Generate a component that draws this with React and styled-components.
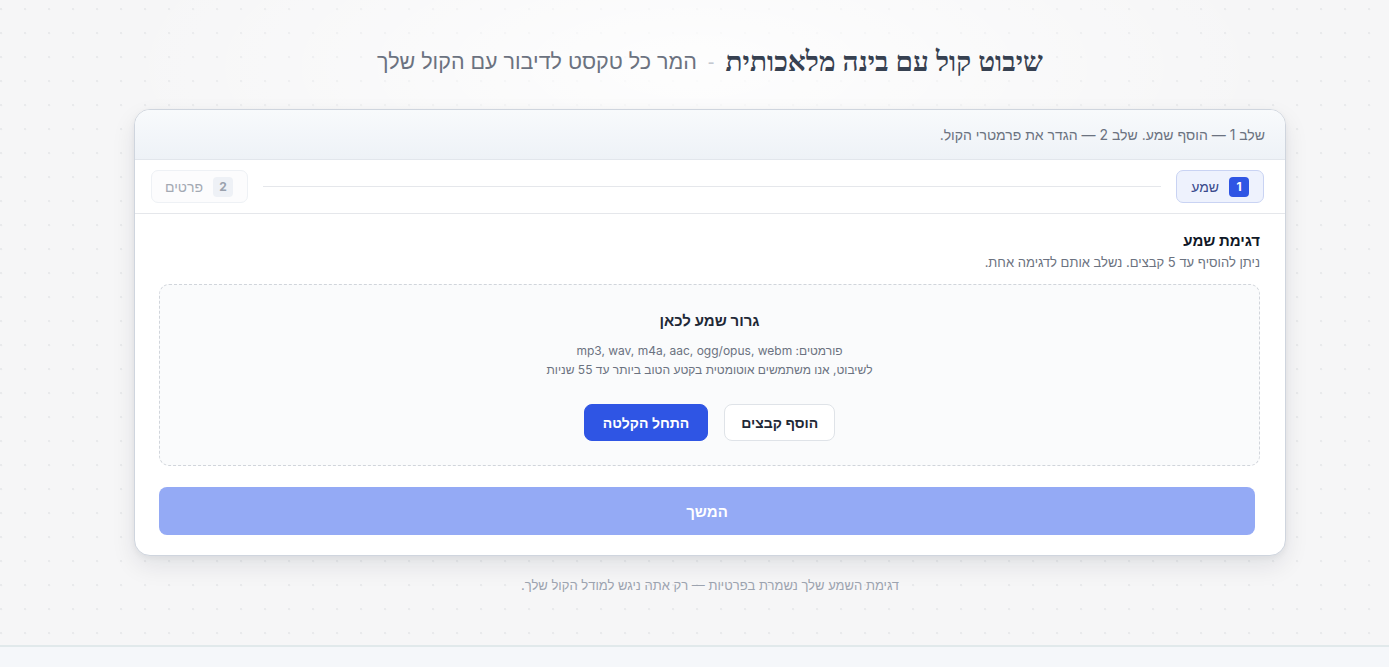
import React from "react";
import styled, { createGlobalStyle } from "styled-components";

const Global = createGlobalStyle`
  html, body { margin: 0; padding: 0; }
  body {
    font-family: Inter, "Liberation Sans", sans-serif;
    background: #f6f6f7;
    color: #111827;
  }
  * { box-sizing: border-box; }
`;

const Page = styled.div`
  direction: rtl;
  min-height: 667px;
  display: flex;
  flex-direction: column;
  background-color: #f6f6f7;
  background-image:
    radial-gradient(ellipse 60% 45% at 50% 10%, rgba(255,255,255,0.85), rgba(255,255,255,0) 70%),
    radial-gradient(circle at 1.2px 1.2px, #e9eaec 1.1px, transparent 1.4px);
  background-size: 100% 100%, 24px 24px;
  background-position: 0 0, 0px 8px;
`;

const Main = styled.main`
  flex: 1;
  display: flex;
  flex-direction: column;
  align-items: center;
  padding: 44px 0 0 31px;
  height: 645px;
`;

const TitleRow = styled.h1`
  margin: 0;
  display: flex;
  align-items: center;
  gap: 8px;
  height: 36px;
  font-weight: 400;
`;

const TitleMain = styled.span`
  font-family: "Liberation Serif", "DejaVu Serif", serif;
  font-size: 28px;
  font-weight: 700;
  color: #374151;
`;

const Dash = styled.span`
  font-family: "Liberation Sans", sans-serif;
  font-size: 20px;
  color: #c4c8d0;
  padding: 0 3px;
`;

const TitleSub = styled.span`
  font-family: "Liberation Sans", sans-serif;
  font-size: 21.5px;
  color: #6b7280;
`;

const Card = styled.section`
  margin-top: 29px;
  width: 1152px;
  background: #fff;
  border: 1px solid #cfd5de;
  border-radius: 16px;
  box-shadow: 0 10px 24px rgba(15, 23, 42, 0.09), 0 2px 6px rgba(15, 23, 42, 0.05);
  overflow: hidden;
`;

const CardHeader = styled.div`
  height: 50px;
  display: flex;
  align-items: center;
  padding: 0 20px;
  font-size: 14px;
  color: #6b7280;
  background: linear-gradient(180deg, #f8fafc 0%, #eef2f7 100%);
  border-bottom: 1px solid #e2e6ec;
`;

const Steps = styled.div`
  height: 54px;
  display: flex;
  align-items: center;
  gap: 15px;
  padding: 0 21px 0 16px;
  border-bottom: 1px solid #e5e7eb;
`;

const Step = styled.div`
  height: 33px;
  display: flex;
  align-items: center;
  gap: 10px;
  padding: 0 14px 0 ${p => (p.$active ? 14 : 13)}px;
  border-radius: 7px;
  border: 1px solid ${p => (p.$active ? "#c9d3f3" : "#eef1f5")};
  background: ${p => (p.$active ? "#eef2fd" : "#fcfcfd")};
  font-size: 14px;
  color: ${p => (p.$active ? "#3a4a8c" : "#a3a9b3")};
`;

const Badge = styled.span`
  width: 20px;
  height: 20px;
  border-radius: 4px;
  display: inline-flex;
  align-items: center;
  justify-content: center;
  font-size: 12px;
  font-weight: 700;
  background: ${p => (p.$active ? "#2f55e4" : "#eef1f6")};
  color: ${p => (p.$active ? "#fff" : "#9aa1ad")};
`;

const StepLine = styled.div`
  flex: 1;
  height: 1px;
  background: #e5e7eb;
`;

const Body = styled.div`
  padding: 16px 25px 20px 24px;
`;

const SectionTitle = styled.h2`
  margin: 0;
  font-size: 15px;
  line-height: 22px;
  font-weight: 700;
  color: #111827;
`;

const SectionSub = styled.p`
  margin: 0;
  font-size: 13px;
  line-height: 20px;
  color: #6b7280;
`;

const Dropzone = styled.div`
  margin-top: 12px;
  border: 1px dashed #d1d5db;
  border-radius: 10px;
  background: #fafbfc;
  padding: 25px 20px 24px;
  display: flex;
  flex-direction: column;
  align-items: center;
`;

const DropTitle = styled.div`
  font-size: 15px;
  line-height: 22px;
  font-weight: 600;
  color: #1f2937;
`;

const DropInfo = styled.div`
  margin-top: 9px;
  font-size: 12px;
  line-height: 19px;
  color: #6b7280;
  text-align: center;
`;

const Buttons = styled.div`
  margin-top: 25px;
  display: flex;
  gap: 16px;
`;

const Button = styled.button`
  height: 37px;
  padding: 0 ${p => (p.$primary ? 18 : 16)}px;
  border-radius: 8px;
  font-family: inherit;
  font-size: 14px;
  font-weight: 600;
  cursor: pointer;
  border: 1px solid ${p => (p.$primary ? "#2f55e4" : "#dfe3e8")};
  background: ${p => (p.$primary ? "#2f55e4" : "#fff")};
  color: ${p => (p.$primary ? "#fff" : "#1f2937")};
`;

const Continue = styled.button`
  margin: 21px 5px 0 0;
  width: calc(100% - 5px);
  height: 48px;
  border: none;
  border-radius: 8px;
  background: #94aaf5;
  color: #fff;
  font-family: inherit;
  font-size: 15px;
  font-weight: 700;
  display: block;
`;

const Note = styled.p`
  margin: 21px 0 0;
  font-size: 13px;
  color: #9ca3af;
`;

const Footer = styled.footer`
  height: 22px;
  border-top: 2px solid #e1e9eb;
  background: #f5f7fa;
`;

export default function App() {
  return (
    <>
      <Global />
      <Page>
        <Main>
          <TitleRow>
            <TitleMain>שיבוט קול עם בינה מלאכותית</TitleMain>
            <Dash>-</Dash>
            <TitleSub>המר כל טקסט לדיבור עם הקול שלך</TitleSub>
          </TitleRow>
          <Card>
            <CardHeader>שלב 1 — הוסף שמע. שלב 2 — הגדר את פרמטרי הקול.</CardHeader>
            <Steps>
              <Step $active>
                <Badge $active>1</Badge>
                שמע
              </Step>
              <StepLine />
              <Step>
                <Badge>2</Badge>
                פרטים
              </Step>
            </Steps>
            <Body>
              <SectionTitle>דגימת שמע</SectionTitle>
              <SectionSub>ניתן להוסיף עד 5 קבצים. נשלב אותם לדגימה אחת.</SectionSub>
              <Dropzone>
                <DropTitle>גרור שמע לכאן</DropTitle>
                <DropInfo>
                  פורמטים: mp3, wav, m4a, aac, ogg/opus, webm
                  <br />
                  לשיבוט, אנו משתמשים אוטומטית בקטע הטוב ביותר עד 55 שניות
                </DropInfo>
                <Buttons>
                  <Button>הוסף קבצים</Button>
                  <Button $primary>התחל הקלטה</Button>
                </Buttons>
              </Dropzone>
              <Continue>המשך</Continue>
            </Body>
          </Card>
          <Note>דגימת השמע שלך נשמרת בפרטיות — רק אתה ניגש למודל הקול שלך.</Note>
        </Main>
        <Footer />
      </Page>
    </>
  );
}
